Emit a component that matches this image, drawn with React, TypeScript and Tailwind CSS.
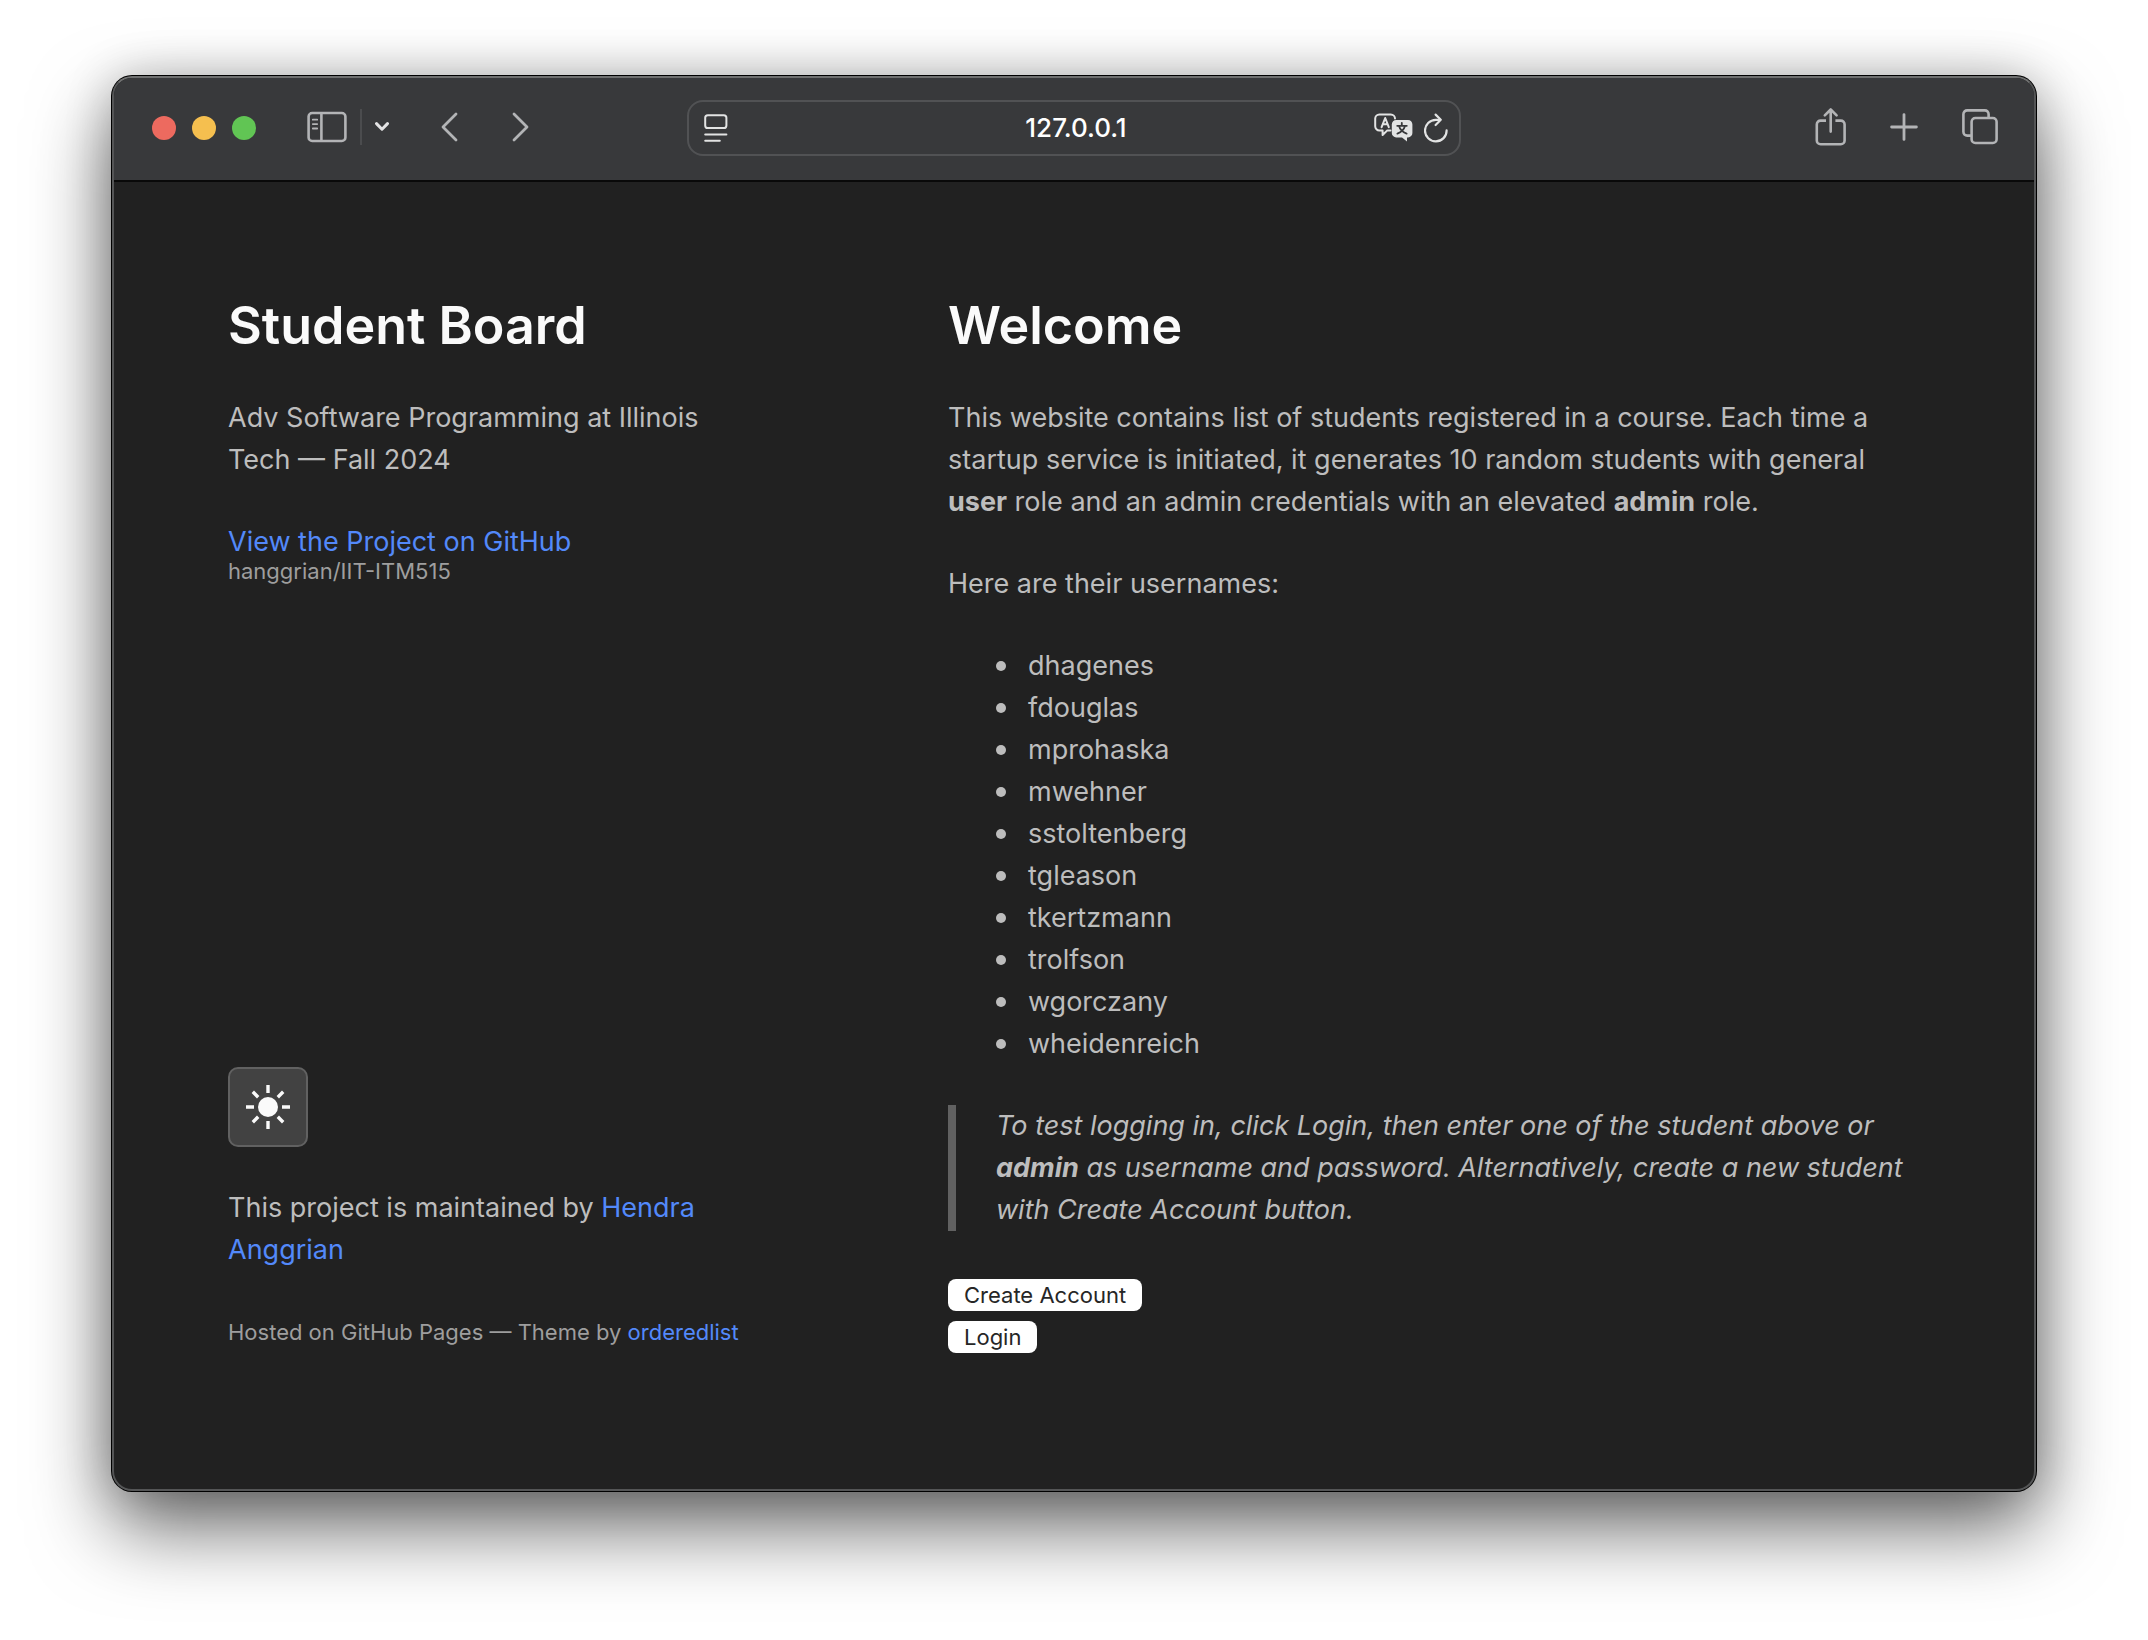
import type { ReactNode } from "react";

const usernames = [
  "dhagenes",
  "fdouglas",
  "mprohaska",
  "mwehner",
  "sstoltenberg",
  "tgleason",
  "tkertzmann",
  "trolfson",
  "wgorczany",
  "wheidenreich",
];

function IconButton({ label, className = "", children }: { label: string; className?: string; children: ReactNode }) {
  return (
    <button type="button" aria-label={label} className={`flex shrink-0 items-center justify-center ${className}`}>
      {children}
    </button>
  );
}

function SidebarIcon() {
  return (
    <svg width="40" height="32" viewBox="0 0 40 32" fill="none" stroke="currentColor" strokeWidth="2.6">
      <rect x="1.6" y="2" width="36.8" height="28" rx="3.6" />
      <path d="M14.4 2v28" />
      <path d="M5.8 8.7h4.4M5.8 13.1h4.4M5.8 17.5h4.4" strokeWidth="1.8" strokeLinecap="round" />
    </svg>
  );
}

function ReaderIcon() {
  return (
    <svg width="24" height="28" viewBox="0 0 24 28" fill="none" stroke="currentColor" strokeWidth="2" strokeLinecap="round">
      <rect x="1.2" y="1.2" width="21.2" height="12.8" rx="2.6" />
      <path d="M1.2 20.4h21.2M1.2 26.8h14.6" />
    </svg>
  );
}

function TranslateIcon() {
  return (
    <svg width="40" height="30" viewBox="0 0 40 30" fill="none" stroke="currentColor" strokeLinecap="round" strokeLinejoin="round">
      <path
        d="M16.5 17.4h-3.2L8.6 22v-4.6H5.4A4.2 4.2 0 0 1 1.2 13.2V5.6A4.2 4.2 0 0 1 5.4 1.4H16.8A4.2 4.2 0 0 1 21 5.6"
        strokeWidth="2"
      />
      <path d="M7.6 14.2 11.2 5l3.6 9.2M8.8 11.2h4.8" strokeWidth="2" />
      <path
        d="M22.2 7H34A4.4 4.4 0 0 1 38.4 11.4V20A4.4 4.4 0 0 1 34 24.4H33V28.6L28 24.4H22.2A4.4 4.4 0 0 1 17.8 20V11.4A4.4 4.4 0 0 1 22.2 7Z"
        fill="currentColor"
        stroke="none"
      />
      <path
        d="M27.8 9.8v2.2M23.2 12.8h9.6M31 13c-1 3.6-3.8 6.2-7.6 7.6M25 13c1 3.6 3.8 6.2 7.6 7.6"
        stroke="#38393b"
        strokeWidth="1.8"
      />
    </svg>
  );
}

function ReloadIcon() {
  return (
    <svg width="24" height="30" viewBox="0 0 24 30" fill="none" stroke="currentColor" strokeWidth="2.2" strokeLinecap="round" strokeLinejoin="round">
      <path d="M22.6 17.4A10.8 10.8 0 1 1 11.8 6.8H16" />
      <path d="M11.6 1.6 16.8 6.8 11.6 12" />
    </svg>
  );
}

function ShareIcon() {
  return (
    <svg width="32" height="40" viewBox="0 0 32 40" fill="none" stroke="currentColor" strokeWidth="2.6" strokeLinecap="round" strokeLinejoin="round">
      <path
        d="M11 13.6H5.6A3.8 3.8 0 0 0 1.8 17.4V33.4A3.8 3.8 0 0 0 5.6 37.2H25.8A3.8 3.8 0 0 0 29.6 33.4V17.4A3.8 3.8 0 0 0 25.8 13.6H20.4"
        strokeLinecap="butt"
      />
      <path d="M15.7 24.6V2.6M9.8 8.4 15.7 2.5 21.6 8.4" />
    </svg>
  );
}

function TabsIcon() {
  return (
    <svg width="36" height="36" viewBox="0 0 36 36" fill="none" stroke="currentColor" strokeWidth="2.6">
      <path d="M9 26.6H5.2A3.8 3.8 0 0 1 1.4 22.8V5.2A3.8 3.8 0 0 1 5.2 1.4H22.8A3.8 3.8 0 0 1 26.6 5.2V9" />
      <rect x="9.6" y="9" width="25" height="25" rx="3.8" />
    </svg>
  );
}

function SunIcon() {
  return (
    <svg width="44" height="44" viewBox="0 0 44 44" fill="none" stroke="currentColor" strokeWidth="3.4">
      <circle cx="22" cy="22" r="10" fill="currentColor" stroke="none" />
      <path d="M22 0v8M22 36v8M0 22h8M36 22h8M6.8 6.8l5.4 5.4M31.8 31.8l5.4 5.4M6.8 37.2l5.4-5.4M31.8 12.2l5.4-5.4" />
    </svg>
  );
}

function Toolbar() {
  return (
    <header className="grid h-[104px] grid-cols-[1fr_minmax(0,774px)_1fr] items-center border-b-2 border-[#090909] bg-[#38393b] pb-0.5 text-[#b3b4b6]">
      <div className="flex items-center pl-[38px]">
        <div className="flex gap-4">
          <button type="button" aria-label="Close window" className="size-6 rounded-full bg-[#ed6a5f]" />
          <button type="button" aria-label="Minimize window" className="size-6 rounded-full bg-[#f5bf4f]" />
          <button type="button" aria-label="Zoom window" className="size-6 rounded-full bg-[#61c554]" />
        </div>
        <div className="ml-[51px] flex items-center pb-0.5">
          <IconButton label="Show sidebar">
            <SidebarIcon />
          </IconButton>
          <div className="ml-[13px] h-9 w-0.5 bg-[#4b4c4e]" />
          <IconButton label="Sidebar options" className="ml-3 text-[#e3e3e4]">
            <svg width="16" height="12" viewBox="0 0 16 12" fill="none" stroke="currentColor" strokeWidth="3" strokeLinecap="round" strokeLinejoin="round">
              <path d="M2.5 2.6 8 8.2l5.5-5.6" />
            </svg>
          </IconButton>
          <IconButton label="Back" className="ml-[50px]">
            <svg width="18" height="30" viewBox="0 0 18 30" fill="none" stroke="currentColor" strokeWidth="2.8" strokeLinecap="round" strokeLinejoin="round">
              <path d="M16 2 3 15l13 13" />
            </svg>
          </IconButton>
          <IconButton label="Forward" className="ml-[54px]">
            <svg width="18" height="30" viewBox="0 0 18 30" fill="none" stroke="currentColor" strokeWidth="2.8" strokeLinecap="round" strokeLinejoin="round">
              <path d="M2 2l13 13L2 28" />
            </svg>
          </IconButton>
        </div>
      </div>

      <div className="grid h-14 grid-cols-[80px_1fr_80px] items-center rounded-2xl border-2 border-[#515254] pr-[11px] pl-[15px] text-[#e2e3e3]">
        <IconButton label="Reader" className="justify-self-start">
          <ReaderIcon />
        </IconButton>
        <input
          aria-label="Address"
          defaultValue="127.0.0.1"
          className="w-full min-w-0 bg-transparent text-center text-[26px] leading-8 font-medium text-white outline-none"
        />
        <div className="flex items-center justify-end gap-[10px]">
          <IconButton label="Translate">
            <TranslateIcon />
          </IconButton>
          <IconButton label="Reload">
            <ReloadIcon />
          </IconButton>
        </div>
      </div>

      <div className="flex items-center justify-end pr-9 pb-0.5">
        <IconButton label="Share">
          <ShareIcon />
        </IconButton>
        <IconButton label="New tab" className="ml-[43px]">
          <svg width="28" height="28" viewBox="0 0 28 28" fill="none" stroke="currentColor" strokeWidth="2.8" strokeLinecap="round">
            <path d="M14 1.6v24.8M1.6 14h24.8" />
          </svg>
        </IconButton>
        <IconButton label="Show all tabs" className="ml-11">
          <TabsIcon />
        </IconButton>
      </div>
    </header>
  );
}

function Sidebar() {
  return (
    <aside className="flex flex-col justify-between">
      <div>
        <h1 className="mb-10 text-[52px] leading-[62px] font-semibold text-[#fafafa]">Student Board</h1>
        <p className="mb-10">Adv Software Programming at Illinois Tech — Fall 2024</p>
        <p>
          <a href="#github" className="block text-[#5389fa]">
            View the Project on GitHub
          </a>
          <small className="block text-[22px] leading-4 text-[#9e9e9e]">hanggrian/IIT-ITM515</small>
        </p>
      </div>
      <footer>
        <button
          type="button"
          aria-label="Use light theme"
          className="mb-10 flex size-20 items-center justify-center rounded-[10px] border-2 border-[#616161] bg-[#424242] text-[#fafafa]"
        >
          <SunIcon />
        </button>
        <p className="mb-10">
          This project is maintained by{" "}
          <a href="#maintainer" className="text-[#5389fa]">
            Hendra Anggrian
          </a>
        </p>
        <p className="text-[22px] text-[#9e9e9e]">
          Hosted on GitHub Pages — Theme by{" "}
          <a href="#theme" className="text-[#5389fa]">
            orderedlist
          </a>
        </p>
      </footer>
    </aside>
  );
}

function Content() {
  return (
    <main className="pr-5">
      <h1 className="mb-10 text-[52px] leading-[62px] font-semibold text-[#fafafa]">Welcome</h1>
      <p className="mb-10">
        This website contains list of students registered in a course. Each time a startup service is initiated, it
        generates 10 random students with general <strong className="font-bold">user</strong> role and an admin
        credentials with an elevated <strong className="font-bold">admin</strong> role.
      </p>
      <p className="mb-10">Here are their usernames:</p>
      <ul className="mb-10 pl-12">
        {usernames.map((name) => (
          <li
            key={name}
            className="flex items-center gap-[22px] before:size-[10px] before:rounded-full before:bg-[#bdbdbd] before:content-['']"
          >
            {name}
          </li>
        ))}
      </ul>
      <blockquote className="mb-10 border-l-8 border-[#616161] pl-10 italic">
        To test logging in, click Login, then enter one of the student above or{" "}
        <strong className="font-bold">admin</strong> as username and password. Alternatively, create a new student with
        Create Account button.
      </blockquote>
      <div className="flex flex-col items-start gap-[10px] pt-2 text-[22px] leading-8 text-[#262626]">
        <button type="button" className="rounded-lg bg-white px-4">
          Create Account
        </button>
        <button type="button" className="rounded-lg bg-white px-4">
          Login
        </button>
      </div>
    </main>
  );
}

export default function App() {
  return (
    <div className="min-h-screen bg-white px-28 pt-[76px] pb-[148px] font-['Inter',sans-serif]">
      <div className="overflow-hidden rounded-[20px] border-2 border-[#545556] border-t-[#6f7070] bg-[#212121] shadow-[0_0_0_1px_#000,0_36px_80px_rgba(0,0,0,0.6),0_0_48px_rgba(0,0,0,0.2)]">
        <Toolbar />
        <div className="grid grid-cols-[540fr_1000fr] gap-[180px] pt-[113px] pr-[86px] pb-[136px] pl-[114px] text-[27px] leading-[42px] text-[#bdbdbd]">
          <Sidebar />
          <Content />
        </div>
      </div>
    </div>
  );
}
